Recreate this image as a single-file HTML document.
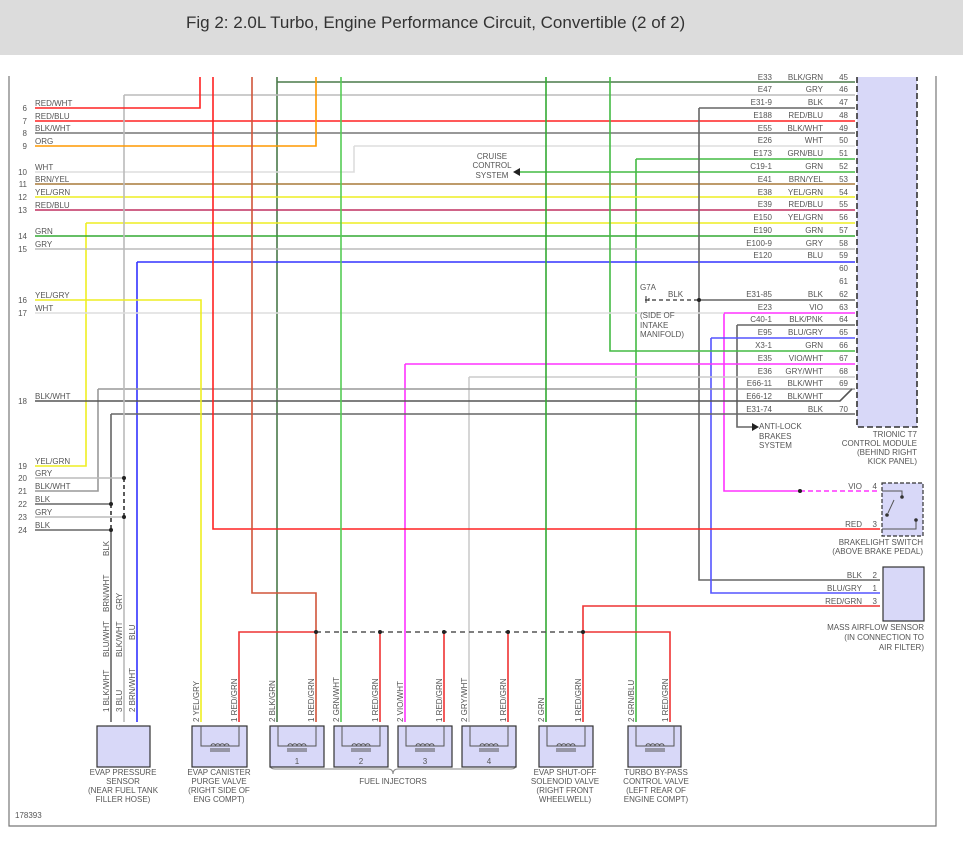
<!DOCTYPE html>
<html><head><meta charset="utf-8"><style>
html,body{margin:0;padding:0;background:#fff;width:963px;height:842px;overflow:hidden}
.hdr{position:absolute;left:0;top:0;width:963px;height:55px;background:#dcdcdc}
.hdr span{position:absolute;left:186px;top:13px;font:17px "Liberation Sans",sans-serif;color:#333}
svg{position:absolute;left:0;top:0}
text{font-family:"Liberation Sans",sans-serif;font-size:8px;fill:#555}
.r{text-anchor:end}.m{text-anchor:middle}
</style></head><body>
<div class="hdr"><span>Fig 2: 2.0L Turbo, Engine Performance Circuit, Convertible (2 of 2)</span></div>
<svg width="963" height="842" viewBox="0 0 963 842">
<defs>
<g id="coil" fill="none" stroke="#555" stroke-width="1">
<path d="M-9 0a2.2 2.2 0 0 1 4.5 0a2.2 2.2 0 0 1 4.5 0a2.2 2.2 0 0 1 4.5 0a2.2 2.2 0 0 1 4.5 0"/>
<path d="M-10 3H10M-10 5H10"/>
</g>
</defs>
<g fill="none" stroke-width="1.6">
<path d="M9 76V826H936V76" stroke="#777" stroke-width="1.2"/>
<rect x="857" y="77" width="60" height="350" fill="#d8d8f8" stroke="none"/>
<path d="M857 77V427H917V77" stroke="#333" stroke-dasharray="6,3"/>
<path d="M277 82H855M277 77V722" stroke="#4a7a4a"/>
<path d="M124 95H855" stroke="#bbb"/>
<path d="M699 108H855" stroke="#666"/>
<path d="M35 121H855" stroke="#f22"/>
<path d="M35 133H855" stroke="#777"/>
<path d="M354 146H855M35 172H354V146" stroke="#ddd"/>
<path d="M636 159H855M636 159V722" stroke="#4b4"/>
<path d="M518 172H855" stroke="#4b4"/>
<path d="M35 184H855" stroke="#a87a3a"/>
<path d="M35 197H855" stroke="#ee2"/>
<path d="M35 210H855" stroke="#c03060"/>
<path d="M86 223H855M86 223V466H35" stroke="#ee2"/>
<path d="M35 236H855" stroke="#3a3"/>
<path d="M35 249H855" stroke="#bbb"/>
<path d="M137 262H855M137 262V722" stroke="#33f"/>
<path d="M699 300H855M699 108V580H880" stroke="#666"/>
<path d="M645 300H699" stroke="#555" stroke-dasharray="4,3"/>
<path d="M724 313H855M724 313V491H800" stroke="#f3f"/>
<path d="M800 491H880" stroke="#f3f" stroke-dasharray="5,3"/>
<path d="M737 325H855M737 325V427H752" stroke="#666"/>
<path d="M711 338H855M711 338V593H880" stroke="#55f"/>
<path d="M610 77V351H855" stroke="#4b4"/>
<path d="M405 364H855M405 364V722" stroke="#f3f"/>
<path d="M469 377H855M469 377V722" stroke="#ccc"/>
<path d="M98 389H855M98 389V491H35" stroke="#999"/>
<path d="M35 401H840L852 389" stroke="#555"/>
<path d="M111 414H855M111 414V504H35M111 530H35M111 530V722" stroke="#666"/>
<path d="M111 504V530" stroke="#333" stroke-dasharray="4,3"/>
<path d="M124 95V478H35M124 517H35M124 517V722" stroke="#bbb"/>
<path d="M124 478V517" stroke="#333" stroke-dasharray="4,3"/>
<path d="M35 108H200V77" stroke="#f22"/>
<path d="M35 146H316V77" stroke="#f90"/>
<path d="M35 313H724" stroke="#ddd"/>
<path d="M35 300H201V722" stroke="#ee2"/>
<path d="M213 77V529H880" stroke="#f22"/>
<path d="M252 77V593H316V722" stroke="#d0553a"/>
<path d="M341 77V722" stroke="#5c5"/>
<path d="M546 77V722" stroke="#3a3"/>
<path d="M316 632H239V722M380 632V722M444 632V722M508 632V722M583 632V722M583 632V606H880M583 632H670V722" stroke="#e33"/>
<path d="M316 632H583" stroke="#555" stroke-dasharray="5,4"/>
<path d="M270 765q0 4 5 4H388q5 0 5 5q0-5 5-5H511q5 0 5-4" stroke="#888" stroke-width="1"/>
</g>
<g fill="#222">
<circle cx="316" cy="632" r="2"/><circle cx="380" cy="632" r="2"/><circle cx="444" cy="632" r="2"/><circle cx="508" cy="632" r="2"/><circle cx="583" cy="632" r="2"/>
<circle cx="699" cy="300" r="2"/><circle cx="800" cy="491" r="2"/>
<circle cx="124" cy="478" r="2"/><circle cx="124" cy="517" r="2"/><circle cx="111" cy="504" r="2"/><circle cx="111" cy="530" r="2"/>
<path d="M513 172l7-4v8z"/><path d="M752 423l7 4-7 4z"/>
</g>
<path d="M646 296v7M649 298v3" stroke="#333" stroke-width="1"/>
<g fill="#d8d8f8" stroke="#333" stroke-width="1.2">
<rect x="97" y="726" width="53" height="41"/>
<rect x="192" y="726" width="55" height="41"/>
<rect x="270" y="726" width="54" height="41"/>
<rect x="334" y="726" width="54" height="41"/>
<rect x="398" y="726" width="54" height="41"/>
<rect x="462" y="726" width="54" height="41"/>
<rect x="539" y="726" width="54" height="41"/>
<rect x="628" y="726" width="53" height="41"/>
<rect x="883" y="567" width="41" height="54"/>
<rect x="882" y="483" width="41" height="53" stroke-dasharray="4,2"/>
</g>
<g fill="none" stroke="#555" stroke-width="1">
<path d="M201 726v20h38v-20M278 726v20h38v-20M342 726v20h38v-20M406 726v20h38v-20M470 726v20h38v-20M547 726v20h38v-20M636 726v20h38v-20"/>
<path d="M882 491h20v5M894 500l-6 13M882 529h34v-8"/>
</g>
<use href="#coil" x="220" y="746"/><use href="#coil" x="297" y="746"/><use href="#coil" x="361" y="746"/><use href="#coil" x="425" y="746"/><use href="#coil" x="489" y="746"/><use href="#coil" x="566" y="746"/><use href="#coil" x="655" y="746"/>
<g fill="#333"><circle cx="902" cy="497" r="1.8"/><circle cx="887" cy="515" r="1.8"/><circle cx="916" cy="520" r="1.8"/></g>
<g>
<text x="27" y="111" class="r">6</text><text x="27" y="124" class="r">7</text><text x="27" y="136" class="r">8</text><text x="27" y="149" class="r">9</text>
<text x="27" y="175" class="r">10</text><text x="27" y="187" class="r">11</text><text x="27" y="200" class="r">12</text><text x="27" y="213" class="r">13</text>
<text x="27" y="239" class="r">14</text><text x="27" y="252" class="r">15</text><text x="27" y="303" class="r">16</text><text x="27" y="316" class="r">17</text>
<text x="27" y="404" class="r">18</text><text x="27" y="469" class="r">19</text><text x="27" y="481" class="r">20</text><text x="27" y="494" class="r">21</text>
<text x="27" y="507" class="r">22</text><text x="27" y="520" class="r">23</text><text x="27" y="533" class="r">24</text>
</g>
<g>
<text x="35" y="106">RED/WHT</text><text x="35" y="119">RED/BLU</text><text x="35" y="131">BLK/WHT</text><text x="35" y="144">ORG</text>
<text x="35" y="170">WHT</text><text x="35" y="182">BRN/YEL</text><text x="35" y="195">YEL/GRN</text><text x="35" y="208">RED/BLU</text>
<text x="35" y="234">GRN</text><text x="35" y="247">GRY</text><text x="35" y="298">YEL/GRY</text><text x="35" y="311">WHT</text>
<text x="35" y="399">BLK/WHT</text><text x="35" y="464">YEL/GRN</text><text x="35" y="476">GRY</text><text x="35" y="489">BLK/WHT</text>
<text x="35" y="502">BLK</text><text x="35" y="515">GRY</text><text x="35" y="528">BLK</text>
</g>
<g>
<text x="772" y="80" class="r">E33</text><text x="823" y="80" class="r">BLK/GRN</text><text x="848" y="80" class="r">45</text>
<text x="772" y="92" class="r">E47</text><text x="823" y="92" class="r">GRY</text><text x="848" y="92" class="r">46</text>
<text x="772" y="105" class="r">E31-9</text><text x="823" y="105" class="r">BLK</text><text x="848" y="105" class="r">47</text>
<text x="772" y="118" class="r">E188</text><text x="823" y="118" class="r">RED/BLU</text><text x="848" y="118" class="r">48</text>
<text x="772" y="131" class="r">E55</text><text x="823" y="131" class="r">BLK/WHT</text><text x="848" y="131" class="r">49</text>
<text x="772" y="143" class="r">E26</text><text x="823" y="143" class="r">WHT</text><text x="848" y="143" class="r">50</text>
<text x="772" y="156" class="r">E173</text><text x="823" y="156" class="r">GRN/BLU</text><text x="848" y="156" class="r">51</text>
<text x="772" y="169" class="r">C19-1</text><text x="823" y="169" class="r">GRN</text><text x="848" y="169" class="r">52</text>
<text x="772" y="182" class="r">E41</text><text x="823" y="182" class="r">BRN/YEL</text><text x="848" y="182" class="r">53</text>
<text x="772" y="195" class="r">E38</text><text x="823" y="195" class="r">YEL/GRN</text><text x="848" y="195" class="r">54</text>
<text x="772" y="207" class="r">E39</text><text x="823" y="207" class="r">RED/BLU</text><text x="848" y="207" class="r">55</text>
<text x="772" y="220" class="r">E150</text><text x="823" y="220" class="r">YEL/GRN</text><text x="848" y="220" class="r">56</text>
<text x="772" y="233" class="r">E190</text><text x="823" y="233" class="r">GRN</text><text x="848" y="233" class="r">57</text>
<text x="772" y="246" class="r">E100-9</text><text x="823" y="246" class="r">GRY</text><text x="848" y="246" class="r">58</text>
<text x="772" y="258" class="r">E120</text><text x="823" y="258" class="r">BLU</text><text x="848" y="258" class="r">59</text>
<text x="848" y="271" class="r">60</text><text x="848" y="284" class="r">61</text>
<text x="772" y="297" class="r">E31-85</text><text x="823" y="297" class="r">BLK</text><text x="848" y="297" class="r">62</text>
<text x="772" y="310" class="r">E23</text><text x="823" y="310" class="r">VIO</text><text x="848" y="310" class="r">63</text>
<text x="772" y="322" class="r">C40-1</text><text x="823" y="322" class="r">BLK/PNK</text><text x="848" y="322" class="r">64</text>
<text x="772" y="335" class="r">E95</text><text x="823" y="335" class="r">BLU/GRY</text><text x="848" y="335" class="r">65</text>
<text x="772" y="348" class="r">X3-1</text><text x="823" y="348" class="r">GRN</text><text x="848" y="348" class="r">66</text>
<text x="772" y="361" class="r">E35</text><text x="823" y="361" class="r">VIO/WHT</text><text x="848" y="361" class="r">67</text>
<text x="772" y="374" class="r">E36</text><text x="823" y="374" class="r">GRY/WHT</text><text x="848" y="374" class="r">68</text>
<text x="772" y="386" class="r">E66-11</text><text x="823" y="386" class="r">BLK/WHT</text><text x="848" y="386" class="r">69</text>
<text x="772" y="399" class="r">E66-12</text><text x="823" y="399" class="r">BLK/WHT</text>
<text x="772" y="412" class="r">E31-74</text><text x="823" y="412" class="r">BLK</text><text x="848" y="412" class="r">70</text>
</g>
<g>
<text x="492" y="159" class="m">CRUISE</text><text x="492" y="168" class="m">CONTROL</text><text x="492" y="178" class="m">SYSTEM</text>
<text x="640" y="290">G7A</text><text x="668" y="297">BLK</text>
<text x="640" y="318">(SIDE OF</text><text x="640" y="328">INTAKE</text><text x="640" y="337">MANIFOLD)</text>
<text x="759" y="429">ANTI-LOCK</text><text x="759" y="439">BRAKES</text><text x="759" y="448">SYSTEM</text>
<text x="917" y="437" class="r">TRIONIC T7</text><text x="917" y="446" class="r">CONTROL MODULE</text><text x="917" y="455" class="r">(BEHIND RIGHT</text><text x="917" y="464" class="r">KICK PANEL)</text>
<text x="862" y="489" class="r">VIO</text><text x="877" y="489" class="r">4</text>
<text x="862" y="527" class="r">RED</text><text x="877" y="527" class="r">3</text>
<text x="923" y="545" class="r">BRAKELIGHT SWITCH</text><text x="923" y="554" class="r">(ABOVE BRAKE PEDAL)</text>
<text x="862" y="578" class="r">BLK</text><text x="877" y="578" class="r">2</text>
<text x="862" y="591" class="r">BLU/GRY</text><text x="877" y="591" class="r">1</text>
<text x="862" y="604" class="r">RED/GRN</text><text x="877" y="604" class="r">3</text>
<text x="924" y="630" class="r">MASS AIRFLOW SENSOR</text><text x="924" y="640" class="r">(IN CONNECTION TO</text><text x="924" y="650" class="r">AIR FILTER)</text>
<text x="123" y="775" class="m">EVAP PRESSURE</text><text x="123" y="784" class="m">SENSOR</text><text x="123" y="793" class="m">(NEAR FUEL TANK</text><text x="123" y="802" class="m">FILLER HOSE)</text>
<text x="219" y="775" class="m">EVAP CANISTER</text><text x="219" y="784" class="m">PURGE VALVE</text><text x="219" y="793" class="m">(RIGHT SIDE OF</text><text x="219" y="802" class="m">ENG COMPT)</text>
<text x="393" y="784" class="m">FUEL INJECTORS</text>
<text x="565" y="775" class="m">EVAP SHUT-OFF</text><text x="565" y="784" class="m">SOLENOID VALVE</text><text x="565" y="793" class="m">(RIGHT FRONT</text><text x="565" y="802" class="m">WHEELWELL)</text>
<text x="656" y="775" class="m">TURBO BY-PASS</text><text x="656" y="784" class="m">CONTROL VALVE</text><text x="656" y="793" class="m">(LEFT REAR OF</text><text x="656" y="802" class="m">ENGINE COMPT)</text>
<text x="15" y="818" font-size="7">178393</text>
<text x="297" y="764" class="m" font-size="7">1</text><text x="361" y="764" class="m" font-size="7">2</text><text x="425" y="764" class="m" font-size="7">3</text><text x="489" y="764" class="m" font-size="7">4</text>
</g>
<g font-size="7.5">
<text transform="translate(109,712) rotate(-90)">1  BLK/WHT</text>
<text transform="translate(122,712) rotate(-90)">3  BLU</text>
<text transform="translate(135,712) rotate(-90)">2  BRN/WHT</text>
<text transform="translate(109,657) rotate(-90)">BLU/WHT</text>
<text transform="translate(122,657) rotate(-90)">BLK/WHT</text>
<text transform="translate(135,640) rotate(-90)">BLU</text>
<text transform="translate(109,612) rotate(-90)">BRN/WHT</text>
<text transform="translate(122,610) rotate(-90)">GRY</text>
<text transform="translate(109,556) rotate(-90)">BLK</text>
<text transform="translate(199,722) rotate(-90)">2  YEL/GRY</text>
<text transform="translate(237,722) rotate(-90)">1  RED/GRN</text>
<text transform="translate(275,722) rotate(-90)">2  BLK/GRN</text>
<text transform="translate(314,722) rotate(-90)">1  RED/GRN</text>
<text transform="translate(339,722) rotate(-90)">2  GRN/WHT</text>
<text transform="translate(378,722) rotate(-90)">1  RED/GRN</text>
<text transform="translate(403,722) rotate(-90)">2  VIO/WHT</text>
<text transform="translate(442,722) rotate(-90)">1  RED/GRN</text>
<text transform="translate(467,722) rotate(-90)">2  GRY/WHT</text>
<text transform="translate(506,722) rotate(-90)">1  RED/GRN</text>
<text transform="translate(544,722) rotate(-90)">2  GRN</text>
<text transform="translate(581,722) rotate(-90)">1  RED/GRN</text>
<text transform="translate(634,722) rotate(-90)">2  GRN/BLU</text>
<text transform="translate(668,722) rotate(-90)">1  RED/GRN</text>
</g>
</svg>
</body></html>
